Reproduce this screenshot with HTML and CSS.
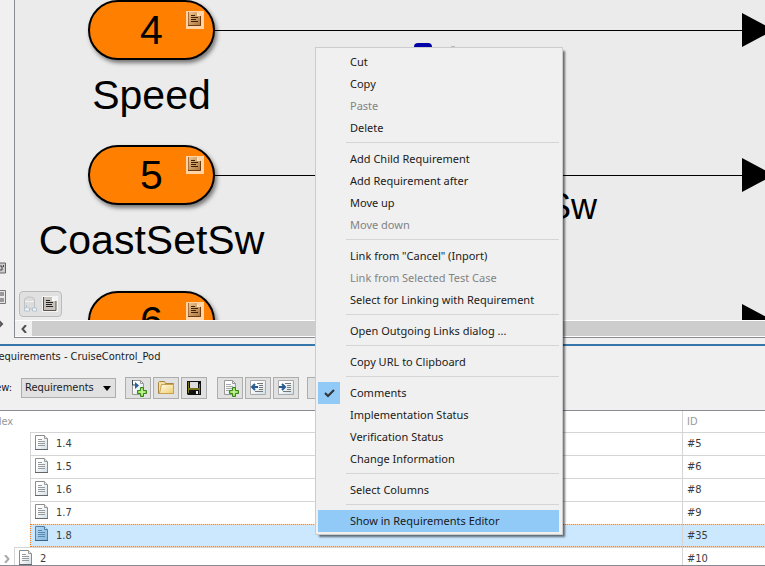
FILE: index.html
```html
<!DOCTYPE html>
<html lang="en">
<head>
<meta charset="utf-8">
<title>Requirements - CruiseControl_Pod</title>
<link rel="stylesheet" href="styles.css">
</head>
<body>
<svg class="defs" aria-hidden="true">
  <defs>
    <linearGradient id="paper" x1="0" y1="0" x2="1" y2="1"><stop offset="0.3" stop-color="#fff"/><stop offset="1" stop-color="#cfdde6"/></linearGradient>
    <linearGradient id="tan" x1="0" y1="0" x2="1" y2="1"><stop offset="0" stop-color="#eec795"/><stop offset="1" stop-color="#a8703a"/></linearGradient>
    <linearGradient id="folder" x1="0" y1="0" x2="1" y2="1"><stop offset="0" stop-color="#fffdf0"/><stop offset="1" stop-color="#f0cd68"/></linearGradient>
    <linearGradient id="blue" x1="0" y1="0" x2="1" y2="1"><stop offset="0" stop-color="#b4d8f2"/><stop offset="1" stop-color="#86b8de"/></linearGradient>
    <symbol id="doc" viewBox="0 0 13 15">
      <path d="M.5.5h9l3 3v11H.5z" fill="url(#paper)" stroke="#8c8c8c"/>
      <path d="M0 14.5h13" stroke="#666"/><path d="M9.5.5v3h3" fill="#eee" stroke="#999"/>
      <path d="M3 4.5h4M3 6.5h7M3 8.5h7M3 10.5h7" stroke="#999"/>
    </symbol>
    <symbol id="doc-selected" viewBox="0 0 13 15">
      <path d="M.5.5h9l3 3v11H.5z" fill="url(#blue)" stroke="#5580a5"/>
      <path d="M0 14.5h13" stroke="#3c6288"/><path d="M9.5.5v3h3" fill="#cce8ff" stroke="#5580a5"/>
      <path d="M3 4.5h4M3 6.5h7M3 8.5h7M3 10.5h7" stroke="#5c88ae"/>
    </symbol>
    <symbol id="badge" viewBox="0 0 18 18">
      <path d="M0 0h18v18H0z" fill="#ffd3a3"/><path d="M2 1h9l4 4v10H2z" fill="url(#tan)"/>
      <path d="M2.5 1v13.5" fill="none" stroke="#a8703a"/><path d="M2 14.5h12.5V5" fill="none" stroke="#6b3d14"/><path d="M11 1v4h4z" fill="#ffe2bd"/>
      <path d="M5 4.5h4M5 6.5h7M5 8.5h5M5 10.5h7" stroke="#3f2000"/>
    </symbol>
    <symbol id="plus" viewBox="0 0 10 10"><path d="M3.5.5h3v3h3v3h-3v3h-3v-3h-3v-3h3z" fill="#8bd94b" stroke="#39851b"/><path d="M5 2v6M2 5h6" stroke="#d7f9b2"/></symbol>
  </defs>
</svg>
<main class="editor">
  <aside class="palette">
    <svg width="7" height="12" viewBox="0 0 7 12"><path d="M0 1h5.5v10H0" fill="#ccc" stroke="#666"/><path d="M0 4h2v4H0M3.5 3v2" fill="none" stroke="#444"/></svg>
    <svg width="7" height="14" viewBox="0 0 7 14"><path d="M0 .5h5.5v13H0" fill="#e8e8e8" stroke="#777"/><path d="M0 2h4v4H0zM0 8h4v4H0z" fill="#999"/></svg>
    <svg width="7" height="8" viewBox="0 0 7 8"><path d="M-1 1l3 3-3 3" fill="none" stroke="#555" stroke-width="2"/></svg>
  </aside>
  <section class="viewport">
    <div class="canvas">
      <div class="wire row-a"></div>
      <div class="node row-a">4<svg class="badge"><use href="#badge"/></svg></div>
      <div class="caption cap-a">Speed</div>
      <div class="wire row-b"></div>
      <div class="node row-b">5<svg class="badge"><use href="#badge"/></svg></div>
      <div class="caption cap-b">CoastSetSw</div>
      <div class="wire row-c"></div>
      <div class="node row-c">6<svg class="badge"><use href="#badge"/></svg></div>
      <div class="signal">Sw</div>
      <div class="link-mark"></div>
      <div class="dot-mark"></div>
      <div class="perspectives">
        <svg width="15" height="16" viewBox="0 0 15 16"><path d="M1.5 4c0-4 10-4 10 0v9h-10z" fill="#dcdcdc" stroke="#c0c0c0"/><path d="M2 5c2 1 7 1 9 0" fill="none" stroke="#f8f8f8"/><path d="M3.5 9v3h-2v3h5v-3h-2M11.5 9v3h-2v3h4v-3h-2" fill="#f4f7fa" stroke="#b4c2ce"/></svg>
        <svg width="16" height="16" viewBox="0 0 16 16"><path d="M0 0h16v16H0z" fill="#f4f4f4"/><path d="M1 1h9l4 4v10H1z" fill="#c8c2bc"/><path d="M1.5 1v13.5H14V5" fill="none" stroke="#5d544b"/><path d="M10 1v4h4z" fill="#fff"/><path d="M4 4.5h4M4 6.5h7M4 8.5h6M4 10.5h7" stroke="#222"/></svg>
      </div>
    </div>
    <div class="scrollbar">
      <button aria-label="Scroll left"><svg width="6" height="8" viewBox="0 0 6 8"><path d="M5 0L1.5 4 5 8" fill="none" stroke="#505050" stroke-width="2"/></svg></button>
      <div class="thumb"></div>
    </div>
  </section>
</main>
<section class="panel">
  <h1 class="title">Requirements - CruiseControl_Pod</h1>
  <div class="toolbar">
    <label for="view">View:</label>
    <div class="picker">
      <select id="view"><option>Requirements</option></select>
      <svg width="8" height="5" viewBox="0 0 8 5"><path d="M0 0h8L4 5z"/></svg>
    </div>
    <div class="group">
      <button aria-label="New requirement set"><svg viewBox="0 0 18 18"><path d="M3.5 1.5h8l3 3v11h-11z" fill="url(#paper)" stroke="#999"/><path d="M11.5 1.5v3h3" fill="none" stroke="#999"/><path d="M3.5 1v5h4" fill="none" stroke="#345"/><path d="M6 3l4 3.5L6 10z" fill="#2b6190"/><use href="#plus" x="8" y="8" width="10" height="10"/></svg></button>
      <button aria-label="Open"><svg viewBox="0 0 18 18"><path d="M1.5 14.5v-11l1-1h5l1 2h8v10z" fill="#f5dfa0" stroke="#a88642"/><path d="M4.5 5.5h12v9h-14z" fill="url(#folder)" stroke="#c8a34f"/></svg></button>
      <button aria-label="Save"><svg viewBox="0 0 18 18"><path d="M2 2h14v14H3l-1-1z" fill="#111"/><path d="M3 3h1v11H3zM14 5h1v10h-1zM4 9h10v2H4z" fill="#777216"/><path d="M5 3h8v6H5z" fill="#ddd"/><path d="M11 12h2v3h-2z" fill="#eee"/></svg></button>
    </div>
    <div class="group">
      <button aria-label="Add requirement"><svg viewBox="0 0 18 18"><path d="M3.5 1.5h8l3 3v11h-11z" fill="url(#paper)" stroke="#999"/><path d="M11.5 1.5v3h3" fill="none" stroke="#999"/><path d="M5 5.5h5M5 7.5h7M5 9.5h7M5 11.5h5" stroke="#aaa"/><use href="#plus" x="8" y="8" width="10" height="10"/></svg></button>
      <button aria-label="Promote"><svg viewBox="0 0 18 18"><path d="M1.5 1.5h15v14h-15z" fill="url(#paper)" stroke="#aaa"/><path d="M8 4.5h6M10 6.5h4M10 8.5h4M10 10.5h4M6 12.5h8" stroke="#777"/><path d="M9 8H4M6 5L3 8l3 3" fill="none" stroke="#285b91" stroke-width="2"/></svg></button>
      <button aria-label="Demote"><svg viewBox="0 0 18 18"><path d="M1.5 1.5h15v14h-15z" fill="url(#paper)" stroke="#aaa"/><path d="M8 4.5h6M10 6.5h4M10 8.5h4M10 10.5h4M6 12.5h8" stroke="#777"/><path d="M2 8h5M5 5l3 3-3 3" fill="none" stroke="#285b91" stroke-width="2"/></svg></button>
    </div>
    <div class="group"><button aria-label="More"></button></div>
  </div>
</section>
<section class="grid">
  <table>
    <thead><tr><th class="index"><span>Index</span></th><th class="id">ID</th></tr></thead>
    <tbody>
      <tr><td><div class="leaf"><svg><use href="#doc"/></svg>1.4</div></td><td class="id">#5</td></tr>
      <tr><td><div class="leaf"><svg><use href="#doc"/></svg>1.5</div></td><td class="id">#6</td></tr>
      <tr><td><div class="leaf"><svg><use href="#doc"/></svg>1.6</div></td><td class="id">#8</td></tr>
      <tr><td><div class="leaf"><svg><use href="#doc"/></svg>1.7</div></td><td class="id">#9</td></tr>
      <tr class="selected"><td><div class="leaf"><svg><use href="#doc-selected"/></svg>1.8</div></td><td class="id">#35</td></tr>
      <tr><td><div class="branch"><button aria-label="Expand"><svg width="6" height="8" viewBox="0 0 6 8"><path d="M1 0l3.5 4L1 8" fill="none" stroke="#aaa" stroke-width="2"/></svg></button><div class="leaf"><svg><use href="#doc"/></svg>2</div></div></td><td class="id">#10</td></tr>
    </tbody>
  </table>
</section>
<div class="menu" role="menu">
  <button role="menuitem">Cut</button>
  <button role="menuitem">Copy</button>
  <button role="menuitem" disabled>Paste</button>
  <button role="menuitem">Delete</button>
  <hr>
  <button role="menuitem">Add Child Requirement</button>
  <button role="menuitem">Add Requirement after</button>
  <button role="menuitem">Move up</button>
  <button role="menuitem" disabled>Move down</button>
  <hr>
  <button role="menuitem">Link from "Cancel" (Inport)</button>
  <button role="menuitem" disabled>Link from Selected Test Case</button>
  <button role="menuitem">Select for Linking with Requirement</button>
  <hr>
  <button role="menuitem">Open Outgoing Links dialog ...</button>
  <hr>
  <button role="menuitem">Copy URL to Clipboard</button>
  <hr>
  <button role="menuitemcheckbox" aria-checked="true"><span class="check"><svg width="11" height="9" viewBox="0 0 11 9"><path d="M1 4l3 3 6-6" fill="none" stroke="#333" stroke-width="2"/></svg></span>Comments</button>
  <button role="menuitem">Implementation Status</button>
  <button role="menuitem">Verification Status</button>
  <button role="menuitem">Change Information</button>
  <hr>
  <button role="menuitem">Select Columns</button>
  <hr>
  <button role="menuitem" class="active">Show in Requirements Editor</button>
</div>
</body>
</html>
```
FILE: styles.css
```css
* { box-sizing: border-box; }
body {
  margin: 0;
  height: 100vh;
  overflow: hidden;
  display: flex;
  flex-direction: column;
  background: #f0f0f0;
  font: 11px/16px "DejaVu Sans Condensed", "Open Sans", sans-serif;
  color: #1a1a1a;
}
button, select { font: inherit; color: inherit; border-radius: 0; }
button { padding: 0; }
svg { display: block; flex: none; }
.defs { position: absolute; width: 0; height: 0; }

.editor { display: flex; flex: 0 0 auto; padding-bottom: 6px; }
.palette { flex: 0 0 14px; padding-top: 262px; display: flex; flex-direction: column; gap: 16px; }
.viewport { flex: 1; min-width: 0; border-left: 1px solid #888b94; border-bottom: 1px solid #888b94; }
.canvas {
  position: relative;
  height: 320px;
  overflow: hidden;
  background: #ebebeb;
  color: #000;
  font-family: "Liberation Sans", sans-serif;
}
.node {
  position: absolute;
  left: 73px;
  width: 127px;
  height: 60px;
  border: 2px solid #000;
  border-radius: 30px;
  background: #ff8000;
  box-shadow: 2px 3px 4px rgba(0, 0, 0, .5);
  font-size: 41px;
  line-height: 56px;
  text-align: center;
}
.badge { position: absolute; right: 9px; top: 9px; width: 18px; height: 18px; }
.wire { position: absolute; left: 200px; right: 0; height: 60px; }
.wire::before { content: ""; position: absolute; left: 0; right: 0; top: 30px; height: 1px; background: #000; }
.wire::after {
  content: "";
  position: absolute;
  right: -9px;
  top: 13px;
  border: solid transparent;
  border-width: 17px 0 17px 32px;
  border-left-color: #000;
}
.row-a { top: 0; }
.row-b { top: 145px; }
.row-c { top: 291px; }
.caption { position: absolute; left: 0; width: 273px; font-size: 41px; line-height: 48px; text-align: center; }
.cap-a { top: 71px; }
.cap-b { top: 216px; }
.signal { position: absolute; left: 532px; top: 187px; font-size: 36px; line-height: 40px; }
.link-mark { position: absolute; left: 399px; top: 43px; width: 18px; height: 12px; border-radius: 4px; background: #0000a8; }
.dot-mark { position: absolute; left: 436px; top: 46px; width: 4px; height: 4px; background: #bbb; }
.perspectives {
  position: absolute;
  left: 4px;
  top: 291px;
  display: flex;
  gap: 4px;
  padding: 4px 3px;
  border: 1px solid #bbb;
  border-radius: 4px;
  background: #e0e0e0;
}
.scrollbar { display: flex; height: 17px; border: solid #fff; border-width: 1px 0; background: #f0f0f0; }
.scrollbar button { width: 17px; border: 0; background: none; display: grid; place-items: center; }
.thumb { flex: 1; background: #cdcdcd; }

.panel { border-top: 2px solid #3676ab; padding: 2px 0 11px; overflow: hidden; }
.title { margin: 0 0 11px -8px; font-size: 11px; line-height: 18px; font-weight: 400; }
.toolbar { display: flex; align-items: center; margin-left: -14px; }
.toolbar label { width: 35px; }
.picker { position: relative; width: 95px; }
.picker select { appearance: none; display: block; width: 100%; height: 20px; padding: 0 3px; border: 1px solid #adadad; background: #e1e1e1; }
.picker svg { position: absolute; right: 5px; top: 8px; pointer-events: none; }
.group { display: flex; gap: 2px; margin-left: 9px; }
.group + .group { margin-left: 10px; }
.group:last-child { margin-left: 8px; }
.group button { width: 26px; height: 22px; border: 1px solid #adadad; background: #e1e1e1; display: grid; place-items: center; }
.group svg { width: 18px; height: 18px; }

.grid { flex: 1; min-height: 0; overflow: hidden; background: #fff; border: solid #888b94; border-width: 1px 0; color: #3c3c3c; }
table { width: 100%; border-collapse: separate; border-spacing: 0; table-layout: fixed; }
th, td { padding: 0; height: 23px; text-align: left; font-weight: 400; }
th { height: 21px; color: #999; }
th span { margin-left: -14px; }
.id { width: 83px; padding-left: 4px; border-left: 1px solid #d5d5d5; }
td.id { border-top: 1px solid #d5d5d5; }
.leaf { display: flex; align-items: center; gap: 8px; height: 23px; margin-left: 30px; padding-left: 4px; border: solid #d5d5d5; border-width: 1px 0 0 1px; }
.leaf svg { width: 13px; height: 15px; margin-bottom: 4px; }
.selected .leaf, .selected .id {
  border-top: 0;
  background:
    repeating-linear-gradient(90deg, #ff7f27 0 1px, #ffcfa6 1px 2px) top / 100% 1px no-repeat,
    repeating-linear-gradient(90deg, #ff7f27 0 1px, #ffcfa6 1px 2px) bottom / 100% 1px no-repeat,
    #cce8ff;
}
.selected .leaf { border-left: 1px dotted #ff7f27; }
.branch { display: flex; }
.branch button { width: 14px; border: 0; background: none; display: grid; place-items: center; }
.branch .leaf { flex: 1; margin-left: 0; }

.menu {
  position: absolute;
  left: 315px;
  top: 47px;
  width: 248px;
  padding: 3px 3px 2px 2px;
  border: 1px solid #ccc;
  background: #f0f0f0;
  box-shadow: 3px 3px 2px -1px rgba(0, 0, 0, .55);
  font-family: "Noto Sans", sans-serif;
}
.menu button { position: relative; display: block; width: 100%; height: 22px; padding: 0 0 0 32px; border: 0; background: none; text-align: left; line-height: 22px; }
.menu button:disabled { color: #838383; }
.menu .active { background: #91c9f7; }
.menu hr { height: 1px; margin: 3px 0 5px 28px; border: 0; background: #d5d5d5; }
.check { position: absolute; left: 0; top: 0; width: 22px; height: 22px; display: grid; place-items: center; background: #91c9f7; }
```
